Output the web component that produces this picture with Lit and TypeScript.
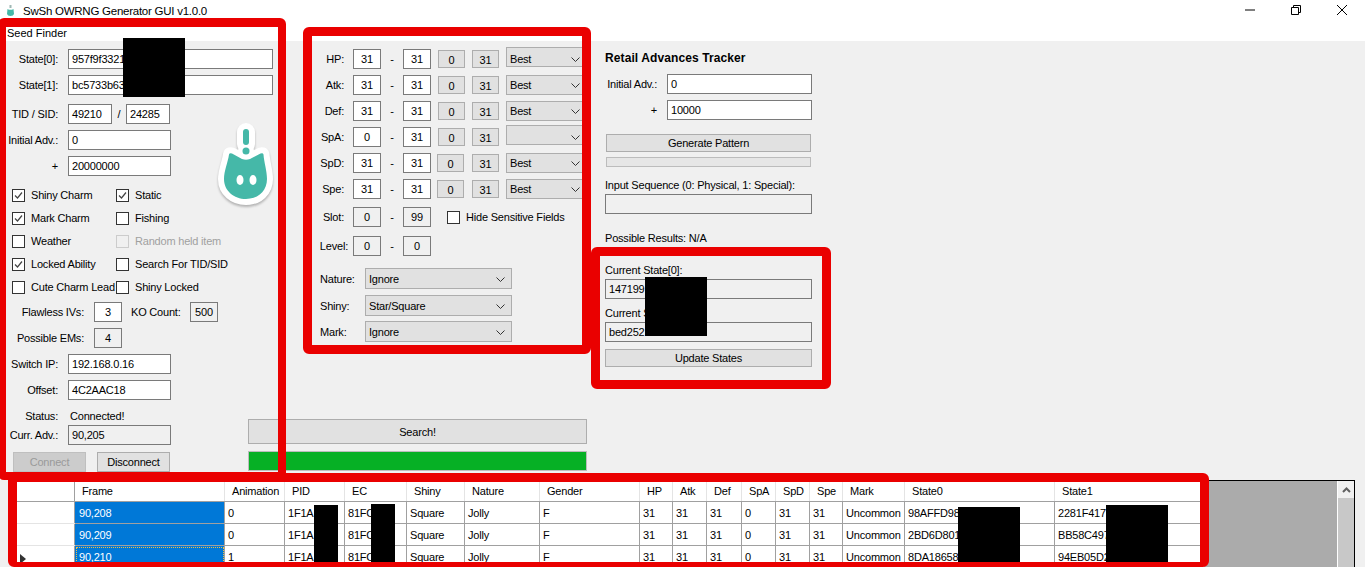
// app.ts
import { LitElement, html, css, svg } from 'lit';
import { customElement } from 'lit/decorators.js';

const chevron = html`<svg class="chev" width="9" height="5" viewBox="0 0 9 5"><path d="M.5.5l4 4 4-4" fill="none" stroke="#333" /></svg>`;

const IVS = [
  { name: 'HP:', min: '31', pick: 'Best', lift: true, nudge: false },
  { name: 'Atk:', min: '31', pick: 'Best', lift: false, nudge: false },
  { name: 'Def:', min: '31', pick: 'Best', lift: false, nudge: false },
  { name: 'SpA:', min: '0', pick: '', lift: true, nudge: false },
  { name: 'SpD:', min: '31', pick: 'Best', lift: false, nudge: true },
  { name: 'Spe:', min: '31', pick: 'Best', lift: false, nudge: true },
];

const CHECKS = [
  ['Shiny Charm', true, 'Static', true],
  ['Mark Charm', true, 'Fishing', false],
  ['Weather', false, 'Random held item', false],
  ['Locked Ability', true, 'Search For TID/SID', false],
  ['Cute Charm Lead', false, 'Shiny Locked', false],
] as const;

const COLUMNS = [
  ['', 60], ['Frame', 150], ['Animation', 60], ['PID', 60], ['EC', 62], ['Shiny', 58], ['Nature', 75],
  ['Gender', 100], ['HP', 33], ['Atk', 34], ['Def', 35], ['SpA', 34], ['SpD', 34], ['Spe', 33],
  ['Mark', 62], ['State0', 150], ['State1', 150],
] as const;

const RESULTS = [
  ['90,208', '0', '1F1A', '81FC', '98AFFD98', '2281F417'],
  ['90,209', '0', '1F1A', '81FC', '2BD6D801', 'BB58C497'],
  ['90,210', '1', '1F1A', '81FC', '8DA18658', '94EB05D2'],
];

const BODY = 'M24 39.500q.5-2 3-1L37 44q4 1.500 8 0l10.500-5.500q2.500-1 3 1C59 47 62 56 62 64c0 12-9 20-21 20s-22-8-22-20c0-8 4-17 5-24.500z';

@customElement('app-root')
export class AppRoot extends LitElement {
  static styles = css`
    :host {
      display: block;
      position: relative;
      height: 567px;
      overflow: hidden;
      background: #f0f0f0;
      color: #000;
      font: 11px 'Liberation Sans', Arial, sans-serif;
      letter-spacing: -0.2px;
    }
    .title {
      display: flex;
      align-items: center;
      height: 21px;
      background: #fff;
      font-size: 11.5px;
      letter-spacing: -0.25px;
    }
    .title .logo { margin: 0 9px 0 7px; }
    .title .name { flex: 1; }
    .win {
      display: flex;
      justify-content: center;
      width: 46px;
      margin-top: -1px;
    }
    .menu {
      height: 20px;
      line-height: 24px;
      padding-left: 7px;
      background: #fff;
      letter-spacing: 0;
    }
    .main {
      display: flex;
      height: 439px;
    }
    .left { width: 248px; padding-top: 8px; box-sizing: border-box; }
    .mid { width: 342px; display: flex; flex-direction: column; padding: 8px 0 9px; box-sizing: border-box; }
    .right { flex: 1; padding: 9px 0 0 15px; }

    .row { display: flex; align-items: center; height: 20px; margin-top: 6px; }
    .row:first-child { margin-top: 0; }
    .lbl { width: 58px; margin-right: 10px; text-align: right; white-space: nowrap; flex: none; }
    .box {
      height: 20px;
      box-sizing: border-box;
      border: 1px solid #7a7a7a;
      background: #fff;
      padding-left: 3px;
      line-height: 18px;
      white-space: nowrap;
      flex: none;
    }
    .box.ro { background: #f0f0f0; }
    .box.c { padding: 0; text-align: center; }
    .w205 { width: 205px; }
    .w44 { width: 44px; }
    .w102 { width: 103px; }
    .w28 { width: 28px; }
    .slash { width: 14px; text-align: center; }
    .gap9 { margin-top: 9px; }
    .checks { display: grid; grid-template-columns: 104px auto; row-gap: 3px; padding-left: 12px; margin-top: 9px; }
    .check { display: flex; align-items: center; height: 20px; gap: 6px; white-space: nowrap; }
    .tick {
      width: 13px;
      height: 13px;
      box-sizing: border-box;
      border: 1px solid #333;
      background: #fff;
      flex: none;
    }
    .tick svg { display: block; }
    .off { color: #a0a0a0; }
    .off .tick { border-color: #ccc; background: #f0f0f0; }
    .iv-row .lbl { width: 84px; }
    .flawless { margin-top: 5px; }
    .ko { width: 49px; margin: 0 10px 0 9px; white-space: nowrap; }
    .status { height: 16px; margin-top: 8px; }
    .status .lbl { margin-right: 12px; }
    .status + .row { margin-top: 1px; }
    .btns { display: flex; margin: 7px 0 0 13px; gap: 11px; }
    .btn {
      height: 20px;
      box-sizing: border-box;
      border: 1px solid #adadad;
      background: #e1e1e1;
      text-align: center;
      line-height: 18px;
    }
    .btn.dis { background: #ccc; border-color: #bfbfbf; color: #9a9a9a; }
    .w73 { width: 73px; }

    .iv { height: 20px; display: flex; align-items: center; margin-top: 6px; }
    .iv:first-child { margin-top: 0; }
    .iv .name { width: 96px; margin-right: 9px; text-align: right; flex: none; }
    .iv .dash { width: 22px; text-align: center; flex: none; }
    .gray {
      width: 27px;
      height: 18px;
      box-sizing: border-box;
      margin-left: 7px;
      border: 1px solid #adadad;
      background: #e1e1e1;
      text-align: center;
      line-height: 18px;
      flex: none;
    }
    .nudge { margin-left: 6px; margin-right: 1px; }
    .select {
      display: flex;
      align-items: center;
      justify-content: space-between;
      height: 21px;
      box-sizing: border-box;
      border: 1px solid #adadad;
      background: #e1e1e1;
      padding: 0 6px 0 3px;
      flex: none;
    }
    .select .chev { margin-top: 1px; }
    .pick { width: 81px; margin-left: 7px; height: 20px; }
    .lift { position: relative; top: -2px; padding-top: 3px; }
    .slot { margin-top: 8px; }
    .level { margin-top: 9px; }
    .iv.level .name { width: 100px; margin-right: 5px; }
    .slot .tick { margin-left: 16px; margin-right: 6px; }
    .nat { margin: 6px 0 0 72px; display: flex; align-items: center; }
    .nat.first { margin-top: 12px; }
    .nat.last { margin-top: 5px; }
    .nat span { width: 45px; }
    .nat .select { width: 147px; padding-left: 3px; }
    .search { margin-top: auto; width: 339px; height: 25px; line-height: 24px; }
    .bar { margin-top: 7px; width: 339px; height: 20px; background: #06b025; box-sizing: border-box; border: 1px solid #bcbcbc; }

    .rt { font-size: 12px; font-weight: bold; letter-spacing: 0.1px; height: 16px; line-height: 16px; white-space: nowrap; margin-bottom: 8px; }
    .right .lbl { width: 52px; }
    .wide { width: 207px; }
    .w145 { width: 145px; }
    .pattern { width: 205px; height: 18px; line-height: 16px; margin: 14px 0 0 1px; }
    .track { width: 205px; height: 10px; margin: 5px 0 0 1px; box-sizing: border-box; border: 1px solid #bcbcbc; background: #e6e6e6; }
    .cap { height: 16px; line-height: 16px; white-space: nowrap; margin-bottom: 1px; }
    .mt10 { margin-top: 10px; }
    .mt16 { margin-top: 16px; }
    .mt6 { margin-top: 6px; }
    .update { width: 207px; height: 18px; line-height: 16px; margin-top: 7px; }

    .grid {
      display: flex;
      height: 87px;
      margin-left: 14px;
      width: 1341px;
      box-sizing: border-box;
      border-top: 1px solid #000;
      border-right: 1px solid #000;
      background: #ababab;
      overflow: hidden;
    }
    .grid table { border-collapse: collapse; table-layout: fixed; height: 0; }
    .spacer { flex: 1; }
    th, td {
      border: 1px solid #a0a0a0;
      background: #fff;
      font-weight: normal;
      text-align: left;
      padding: 0 0 0 3px;
      height: 21px;
      white-space: nowrap;
      overflow: hidden;
    }
    th { padding-left: 7px; height: 20px; border-top: 0; border-right-color: #e4e4e4; }
    th:first-child { border-right-color: #a0a0a0; }
    td.head { border-top-color: #e4e4e4; border-bottom-color: #e4e4e4; padding: 0; }
    td.head svg { display: block; margin: 5px 0 0 5px; }
    td.sel { background: #0078d7; color: #fff; padding-left: 4px; }
    td.cur { outline: 1px dotted #f0c040; outline-offset: -2px; }
    .scroll { width: 16px; border-left: 1px solid #fff; background: #c8c8c8; }
    .scroll .up { height: 17px; background: #f0f0f0; display: flex; align-items: center; justify-content: center; }

    .mascot { position: absolute; left: 205px; top: 115px; filter: drop-shadow(0 2px 1px rgba(0, 0, 0, .25)); }
    .mark { position: absolute; box-sizing: border-box; border: 9px solid #ea0000; border-radius: 6px; }
    .m1 { left: -2px; top: 18px; width: 288px; height: 462px; border-width: 9px 8px 8px 8px; }
    .m2 { left: 303px; top: 27px; width: 288px; height: 327px; }
    .m3 { left: 591px; top: 247px; width: 240px; height: 142px; }
    .m4 { left: 8px; top: 473px; width: 1201px; height: 94px; border-bottom-width: 5px; }
    .ink { position: absolute; background: #000; }
    .k1 { left: 123px; top: 38px; width: 62px; height: 59px; }
    .k2 { left: 645px; top: 277px; width: 62px; height: 59px; }
    .k3 { left: 314px; top: 505px; width: 24px; height: 62px; }
    .k4 { left: 371px; top: 504px; width: 24px; height: 63px; }
    .k5 { left: 958px; top: 507px; width: 62px; height: 60px; }
    .k6 { left: 1106px; top: 505px; width: 62px; height: 62px; }
  `;

  private tick(on: boolean) {
    return html`<div class="tick">${on
      ? html`<svg width="11" height="11" viewBox="0 0 11 11"><path d="M2 5.5l2.5 2.5L9 2.5" fill="none" stroke="#444" stroke-width="1.2" /></svg>`
      : ''}</div>`;
  }

  private check(text: string, on: boolean, off = false) {
    return html`<div class="check ${off ? 'off' : ''}">${this.tick(on)}<span>${text}</span></div>`;
  }

  private renderLeft() {
    return html`<div class="left">
      <div class="row"><span class="lbl">State[0]:</span><div class="box w205">957f9f3321</div></div>
      <div class="row"><span class="lbl">State[1]:</span><div class="box w205">bc5733b63</div></div>
      <div class="row gap9">
        <span class="lbl">TID / SID:</span><div class="box w44">49210</div><span class="slash">/</span><div class="box w44">24285</div>
      </div>
      <div class="row"><span class="lbl">Initial Adv.:</span><div class="box w102">0</div></div>
      <div class="row"><span class="lbl">+</span><div class="box w102">20000000</div></div>
      <div class="checks">
        ${CHECKS.map(([a, aOn, b, bOn]) => html`${this.check(a, aOn)}${this.check(b, bOn, b === 'Random held item')}`)}
      </div>
      <div class="row iv-row flawless">
        <span class="lbl">Flawless IVs:</span><div class="box w28 c">3</div>
        <span class="ko">KO Count:</span><div class="box w28 c ro">500</div>
      </div>
      <div class="row iv-row"><span class="lbl">Possible EMs:</span><div class="box w28 c ro">4</div></div>
      <div class="row"><span class="lbl">Switch IP:</span><div class="box w102">192.168.0.16</div></div>
      <div class="row"><span class="lbl">Offset:</span><div class="box w102">4C2AAC18</div></div>
      <div class="row status"><span class="lbl">Status:</span><span>Connected!</span></div>
      <div class="row"><span class="lbl">Curr. Adv.:</span><div class="box w102 ro">90,205</div></div>
      <div class="btns">
        <div class="btn dis w73">Connect</div>
        <div class="btn w73">Disconnect</div>
      </div>
    </div>`;
  }

  private renderMid() {
    return html`<div class="mid">
      <div>
        ${IVS.map((iv) => html`<div class="iv">
          <span class="name">${iv.name}</span>
          <div class="box w28 c">${iv.min}</div>
          <span class="dash">-</span>
          <div class="box w28 c">31</div>
          <div class="gray ${iv.nudge ? 'nudge' : ''}">0</div>
          <div class="gray">31</div>
          <div class="select pick ${iv.lift ? 'lift' : ''}"><span>${iv.pick}</span>${chevron}</div>
        </div>`)}
        <div class="iv slot">
          <span class="name">Slot:</span>
          <div class="box w28 c ro">0</div>
          <span class="dash">-</span>
          <div class="box w28 c ro">99</div>
          ${this.tick(false)}<span>Hide Sensitive Fields</span>
        </div>
        <div class="iv level">
          <span class="name">Level:</span>
          <div class="box w28 c ro">0</div>
          <span class="dash">-</span>
          <div class="box w28 c ro">0</div>
        </div>
        <div class="nat first"><span>Nature:</span><div class="select">Ignore${chevron}</div></div>
        <div class="nat"><span>Shiny:</span><div class="select">Star/Square${chevron}</div></div>
        <div class="nat last"><span>Mark:</span><div class="select">Ignore${chevron}</div></div>
      </div>
      <div class="btn search">Search!</div>
      <div class="bar"></div>
    </div>`;
  }

  private renderRight() {
    return html`<div class="right">
      <div class="rt">Retail Advances Tracker</div>
      <div class="row"><span class="lbl">Initial Adv.:</span><div class="box w145">0</div></div>
      <div class="row"><span class="lbl">+</span><div class="box w145">10000</div></div>
      <div class="btn pattern">Generate Pattern</div>
      <div class="track"></div>
      <div class="cap mt10">Input Sequence (0: Physical, 1: Special):</div>
      <div class="box ro wide"></div>
      <div class="cap mt16">Possible Results: N/A</div>
      <div class="cap mt16">Current State[0]:</div>
      <div class="box ro wide">147199</div>
      <div class="cap mt6">Current State[1]:</div>
      <div class="box ro wide">bed252</div>
      <div class="btn update">Update States</div>
    </div>`;
  }

  private renderGrid() {
    return html`<div class="grid">
      <table>
        <colgroup>${COLUMNS.map((c) => html`<col style="width:${c[1]}px" />`)}</colgroup>
        <thead><tr>${COLUMNS.map((c) => html`<th>${c[0]}</th>`)}</tr></thead>
        <tbody>
          ${RESULTS.map((r, i) => html`<tr>
            <td class="head">${i === 2
              ? html`<svg width="6" height="10" viewBox="0 0 6 10"><path d="M0 0l6 5-6 5z" fill="#333" /></svg>`
              : ''}</td>
            <td class="sel ${i === 2 ? 'cur' : ''}">${r[0]}</td>
            <td>${r[1]}</td><td>${r[2]}</td><td>${r[3]}</td>
            <td>Square</td><td>Jolly</td><td>F</td>
            <td>31</td><td>31</td><td>31</td><td>0</td><td>31</td><td>31</td>
            <td>Uncommon</td><td>${r[4]}</td><td>${r[5]}</td>
          </tr>`)}
        </tbody>
      </table>
      <div class="spacer"></div>
      <div class="scroll">
        <div class="up"><svg width="9" height="6" viewBox="0 0 9 6"><path d="M1 5l3.5-3.5L8 5" fill="none" stroke="#606060" stroke-width="2" /></svg></div>
      </div>
    </div>`;
  }

  render() {
    return html`
      <div class="title">
        <svg class="logo" width="7" height="11" viewBox="0 0 7 11">
          <rect x="2.5" y="0" width="2" height="3" fill="#9fb8b4" />
          <path d="M.5 4l1.500 .8h3L6.500 4 7 9q-.5 2-3.500 2T0 9z" fill="#45b8a8" />
        </svg>
        <span class="name">SwSh OWRNG Generator GUI v1.0.0</span>
        <div class="win"><svg width="10" height="10" viewBox="0 0 10 10"><path d="M0 5h10" stroke="#000" /></svg></div>
        <div class="win"><svg width="10" height="10" viewBox="0 0 10 10"><path d="M.5 2.500h7v7h-7zM2.500 2.500V.5h7v7h-2" fill="none" stroke="#000" /></svg></div>
        <div class="win"><svg width="10" height="10" viewBox="0 0 10 10"><path d="M0 0l10 10M10 0L0 10" stroke="#000" /></svg></div>
      </div>
      <div class="menu">Seed Finder</div>
      <div class="main">${this.renderLeft()}${this.renderMid()}${this.renderRight()}</div>
      ${this.renderGrid()}

      <svg class="mascot" width="80" height="100" viewBox="0 0 80 100">
        ${svg`
          <path d=${BODY} fill="#fff" stroke="#fff" stroke-width="12" stroke-linejoin="round" />
          <rect x="32" y="8" width="18" height="30" rx="9" fill="#fff" />
          <circle cx="41" cy="36" r="8" fill="#fff" />
          <rect x="38" y="14" width="6" height="16" rx="3" fill="#45b8a8" />
          <circle cx="41" cy="36" r="3.500" fill="#45b8a8" />
          <path d=${BODY} fill="#45b8a8" />
          <ellipse cx="35" cy="65" rx="3.500" ry="5" fill="#fff" />
          <ellipse cx="48" cy="65" rx="3.500" ry="5" fill="#fff" />
        `}
      </svg>

      <div class="ink k1"></div><div class="ink k2"></div><div class="ink k3"></div>
      <div class="ink k4"></div><div class="ink k5"></div><div class="ink k6"></div>
      <div class="mark m1"></div><div class="mark m2"></div><div class="mark m3"></div><div class="mark m4"></div>
    `;
  }
}
